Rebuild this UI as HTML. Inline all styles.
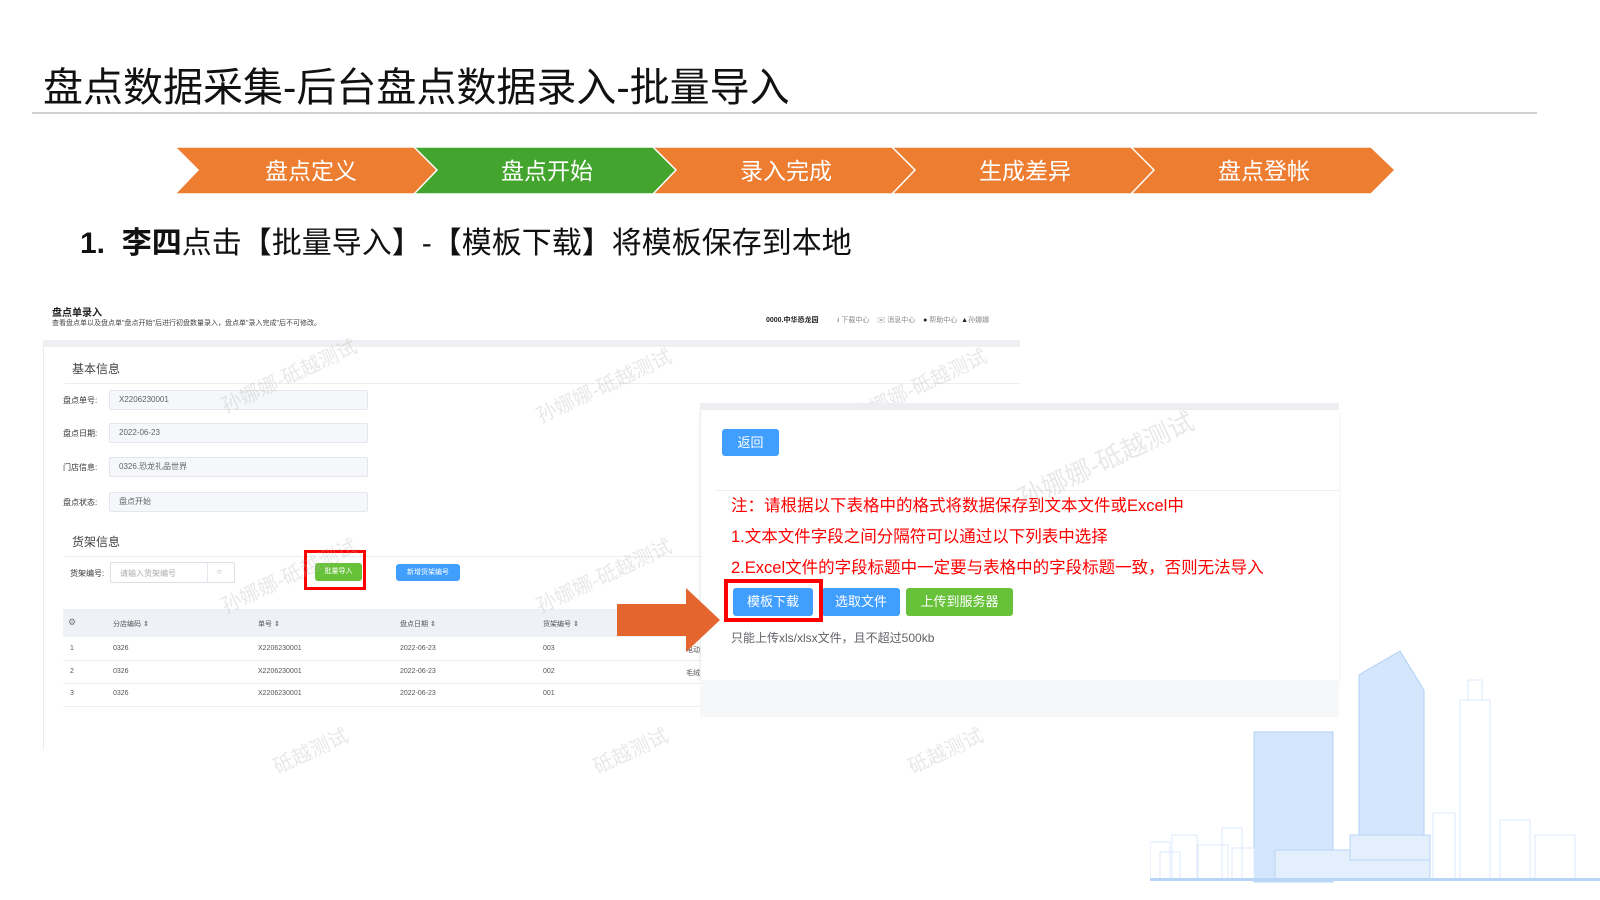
<!DOCTYPE html>
<html><head><meta charset="utf-8"><style>
*{margin:0;padding:0;box-sizing:border-box}
body{width:1600px;height:900px;background:#fff;position:relative;overflow:hidden;font-family:"Liberation Sans","Noto Sans CJK SC",sans-serif}
.a{position:absolute;white-space:nowrap}
.lbl{font-size:8px;color:#333}
.inp{position:absolute;background:#f5f7fa;border:1px solid #e4e7ed;border-radius:2px;font-size:8px;color:#606266;padding-left:9px;line-height:18px;height:20px}
.th{font-size:7px;color:#555;top:619px}
.td{font-size:7px;color:#555}
.wm{position:absolute;color:rgba(180,180,180,.3);font-size:20px;transform:rotate(-25deg);white-space:nowrap}
.btn{position:absolute;color:#fff;font-size:13px;text-align:center;border-radius:3px}
.red{position:absolute;color:#f00;font-size:16.5px;white-space:nowrap}
</style></head><body>
<div class="a" style="left:43px;top:55px;font-size:40px;color:#111">盘点数据采集-后台盘点数据录入-批量导入</div>
<div class="a" style="left:32px;top:112px;width:1505px;height:2px;background:#d0d0d0"></div>

<svg class="a" style="left:170px;top:145px" width="1230" height="52">
<g stroke="#fff" stroke-width="1.5">
<polygon points="5,2 245,2 268,25 245,49 5,49 28,25" fill="#ed7d31"/>
<polygon points="244,2 484,2 507,25 484,49 244,49 267,25" fill="#43a52d"/>
<polygon points="483,2 723,2 746,25 723,49 483,49 506,25" fill="#ed7d31"/>
<polygon points="722,2 962,2 985,25 962,49 722,49 745,25" fill="#ed7d31"/>
<polygon points="961,2 1201,2 1225,25 1201,49 961,49 984,25" fill="#ed7d31"/>
</g>
<g fill="#fff" font-size="23" text-anchor="middle" font-family="Liberation Sans,Noto Sans CJK SC,sans-serif">
<text x="141" y="34">盘点定义</text><text x="377" y="34">盘点开始</text><text x="616" y="34">录入完成</text><text x="855" y="34">生成差异</text><text x="1094" y="34">盘点登帐</text>
</g></svg>

<div class="a" style="left:80px;top:218px;font-size:30px;color:#111"><b>1.&nbsp;&nbsp;李四</b>点击【批量导入】-【模板下载】将模板保存到本地</div>

<!-- left screenshot -->
<div class="a" style="left:52px;top:304px;font-size:10px;font-weight:bold;color:#222">盘点单录入</div>
<div class="a" style="left:52px;top:318px;font-size:7px;color:#444">查看盘点单以及盘点单"盘点开始"后进行初盘数量录入，盘点单"录入完成"后不可修改。</div>
<div class="a" style="left:766px;top:315px;font-size:7px;color:#222;font-weight:bold">0000.中华恐龙园</div>
<div class="a" style="left:837px;top:315px;font-size:7px;color:#888">⭳ 下载中心 &nbsp;&nbsp;&nbsp;✉ 消息中心 &nbsp;&nbsp;&nbsp;<span style="color:#222">●</span> 帮助中心 &nbsp;<span style="color:#222">▲</span>孙娜娜</div>
<div class="a" style="left:43px;top:340px;width:977px;height:7px;background:#eef0f3"></div>
<div class="a" style="left:43px;top:347px;width:1px;height:403px;background:#ececec"></div>
<div class="a" style="left:72px;top:360px;font-size:12px;color:#444">基本信息</div>
<div class="a" style="left:65px;top:383px;width:955px;height:1px;background:#ebeef5"></div>
<div class="a lbl" style="left:63px;top:395px">盘点单号:</div><div class="inp" style="left:109px;top:390px;width:259px">X2206230001</div>
<div class="a lbl" style="left:63px;top:428px">盘点日期:</div><div class="inp" style="left:109px;top:423px;width:259px">2022-06-23</div>
<div class="a lbl" style="left:63px;top:462px">门店信息:</div><div class="inp" style="left:109px;top:457px;width:259px">0326.恐龙礼品世界</div>
<div class="a lbl" style="left:63px;top:497px">盘点状态:</div><div class="inp" style="left:109px;top:492px;width:259px">盘点开始</div>
<div class="a" style="left:72px;top:533px;font-size:12px;color:#444">货架信息</div>
<div class="a" style="left:65px;top:556px;width:640px;height:1px;background:#ebeef5"></div>
<div class="a lbl" style="left:70px;top:568px">货架编号:</div>
<div class="a" style="left:110px;top:562px;width:125px;height:21px;border:1px solid #dcdfe6;border-radius:2px;font-size:8px;color:#aaa;padding:5px 9px">请输入货架编号<span style="position:absolute;left:96px;top:0;width:1px;height:19px;background:#e4e7ed"></span><span style="position:absolute;left:106px;top:4px;color:#999">○</span></div>
<div class="btn" style="left:315px;top:563px;width:47px;height:18px;background:#67c23a;font-size:7px;line-height:18px">批量导入</div>
<div class="a" style="left:304px;top:550px;width:62px;height:40px;border:3px solid #f00"></div>
<div class="btn" style="left:396px;top:564px;width:64px;height:17px;background:#409eff;font-size:7px;line-height:17px">新增货架编号</div>
<div class="a" style="left:63px;top:609px;width:640px;height:28px;background:#eef1f6"></div>
<div class="a th" style="left:68px;font-size:9px;top:617px;color:#777">⚙</div>
<div class="a th" style="left:113px">分店编码 ⇕</div><div class="a th" style="left:258px">单号 ⇕</div><div class="a th" style="left:400px">盘点日期 ⇕</div><div class="a th" style="left:543px">货架编号 ⇕</div>
<div class="a td" style="left:70px;top:645px">1</div><div class="a td" style="left:113px;top:645px">0326</div><div class="a td" style="left:258px;top:645px">X2206230001</div><div class="a td" style="left:400px;top:645px">2022-06-23</div><div class="a td" style="left:543px;top:645px">003</div><div class="a td" style="left:686px;top:645px">电动</div>
<div class="a" style="left:63px;top:660px;width:640px;height:1px;background:#ebeef5"></div>
<div class="a td" style="left:70px;top:668px">2</div><div class="a td" style="left:113px;top:668px">0326</div><div class="a td" style="left:258px;top:668px">X2206230001</div><div class="a td" style="left:400px;top:668px">2022-06-23</div><div class="a td" style="left:543px;top:668px">002</div><div class="a td" style="left:686px;top:668px">毛绒</div>
<div class="a" style="left:63px;top:683px;width:640px;height:1px;background:#ebeef5"></div>
<div class="a td" style="left:70px;top:690px">3</div><div class="a td" style="left:113px;top:690px">0326</div><div class="a td" style="left:258px;top:690px">X2206230001</div><div class="a td" style="left:400px;top:690px">2022-06-23</div><div class="a td" style="left:543px;top:690px">001</div>
<div class="a" style="left:63px;top:706px;width:640px;height:1px;background:#ebeef5"></div>

<div class="wm" style="left:215px;top:360px">孙娜娜-砥越测试</div>
<div class="wm" style="left:530px;top:370px">孙娜娜-砥越测试</div>
<div class="wm" style="left:845px;top:370px">孙娜娜-砥越测试</div>
<div class="wm" style="left:215px;top:560px">孙娜娜-砥越测试</div>
<div class="wm" style="left:530px;top:560px">孙娜娜-砥越测试</div>
<div class="wm" style="left:270px;top:735px">砥越测试</div>
<div class="wm" style="left:590px;top:735px">砥越测试</div>
<div class="wm" style="left:905px;top:735px">砥越测试</div>

<!-- city -->
<svg class="a" style="left:1150px;top:620px" width="450" height="280">
<g fill="#d3e6fc" stroke="#b0d1f7" stroke-width="1">
<rect x="104" y="112" width="79" height="150"/>
<polygon points="217,50 250,31 274,70 274,260 209,260 209,55"/>
</g>
<g fill="none" stroke="#dbe9fb" stroke-width="1">
<rect x="310" y="80" width="30" height="180"/><rect x="318" y="60" width="14" height="20"/>
<rect x="283" y="193" width="22" height="67"/><rect x="350" y="200" width="30" height="60"/><rect x="385" y="215" width="40" height="45"/>
<rect x="0" y="222" width="20" height="38"/><rect x="10" y="232" width="20" height="28"/><rect x="22" y="215" width="25" height="45"/><rect x="48" y="225" width="30" height="35"/><rect x="72" y="208" width="20" height="52"/><rect x="82" y="228" width="22" height="32"/>
</g>
<g fill="#e3effd" stroke="#b9d6f8"><rect x="125" y="230" width="155" height="30"/><rect x="200" y="215" width="80" height="25"/></g>
<rect x="0" y="258" width="450" height="3" fill="#b8d4f7"/>
</svg>

<!-- dialog -->
<div class="a" style="left:700px;top:403px;width:639px;height:7px;background:#eceef1"></div>
<div class="a" style="left:700px;top:410px;width:639px;height:270px;background:#fff;border-left:1px solid #eee;box-shadow:0 2px 4px rgba(0,0,0,.08)"></div>
<div class="a" style="left:700px;top:680px;width:639px;height:37px;background:#f6f7f9"></div>
<div class="btn" style="left:722px;top:429px;width:57px;height:27px;line-height:27px;background:#409eff;font-size:13px">返回</div>
<div class="a" style="left:715px;top:490px;width:624px;height:1px;background:#ebeef5"></div>
<div class="wm" style="left:1010px;top:440px;font-size:26px">孙娜娜-砥越测试</div>
<div class="red" style="left:731px;top:492px">注：请根据以下表格中的格式将数据保存到文本文件或Excel中</div>
<div class="red" style="left:731px;top:523px">1.文本文件字段之间分隔符可以通过以下列表中选择</div>
<div class="red" style="left:731px;top:554px">2.Excel文件的字段标题中一定要与表格中的字段标题一致，否则无法导入</div>
<div class="btn" style="left:733px;top:588px;width:80px;height:28px;line-height:28px;background:#409eff">模板下载</div>
<div class="btn" style="left:822px;top:588px;width:78px;height:28px;line-height:28px;background:#409eff">选取文件</div>
<div class="btn" style="left:906px;top:588px;width:107px;height:28px;line-height:28px;background:#67c23a">上传到服务器</div>
<div class="a" style="left:724px;top:579px;width:99px;height:43px;border:4px solid #f00"></div>
<div class="a" style="left:731px;top:629px;font-size:12px;color:#606266">只能上传xls/xlsx文件，且不超过500kb</div>

<svg class="a" style="left:616px;top:587px" width="106" height="66"><polygon points="1,17 70,17 70,1 104,33 70,65 70,49 1,49" fill="#e5652e"/></svg>
</body></html>
